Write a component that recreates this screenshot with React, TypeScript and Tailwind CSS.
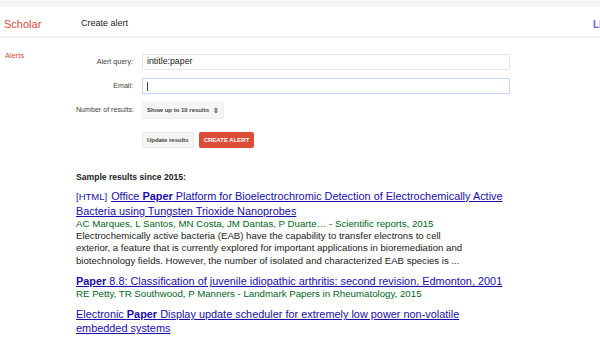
import React from "react";

const font = { fontFamily: '"Liberation Sans", Arial, sans-serif' };

const results = [
  {
    tag: "[HTML]",
    title: (
      <>
        Office <b>Paper</b> Platform for Bioelectrochromic Detection of Electrochemically Active Bacteria using
        Tungsten Trioxide Nanoprobes
      </>
    ),
    authors: "AC Marques, L Santos, MN Costa, JM Dantas, P Duarte… - Scientific reports, 2015",
    snippet:
      "Electrochemically active bacteria (EAB) have the capability to transfer electrons to cell exterior, a feature that is currently explored for important applications in bioremediation and biotechnology fields. However, the number of isolated and characterized EAB species is ...",
  },
  {
    title: (
      <>
        <b>Paper</b> 8.8: Classification of juvenile idiopathic arthritis: second revision, Edmonton, 2001
      </>
    ),
    authors: "RE Petty, TR Southwood, P Manners - Landmark Papers in Rheumatology, 2015",
  },
  {
    title: (
      <>
        Electronic <b>Paper</b> Display update scheduler for extremely low power non-volatile embedded systems
      </>
    ),
    authors: "Y Chiu, C Hoskinson, T Kuroda - Low Power and High Speed Chips (COOL CHIPS) ..., 2015",
  },
];

export default function App() {
  return (
    <div className="w-[600px] h-[337px] overflow-hidden bg-white text-[#222]" style={font}>
      <div className="h-[7px] bg-[#f5f5f5]" />
      <div className="h-[31px] pt-[5px] flex items-center border-b-2 border-[#f1f1f1] relative">
        <div className="pl-[4px] w-[81px] text-[11px] text-[#dd4b39]">Scholar</div>
        <div className="text-[9px] text-[#222]">Create alert</div>
        <div className="absolute left-[593px] text-[10px] font-bold text-[#6a5fe0]">Li</div>
      </div>
      <div className="flex">
        <div className="w-[76px] shrink-0 pl-[5px] pt-[12px] text-[7.5px] text-[#dd4b39]">Alerts</div>
        <div className="flex-1 pt-[16px]">
          <div className="grid grid-cols-[57px_368px] gap-x-[9px] gap-y-[8px] items-center text-[7.1px] text-[#444]">
            <div className="text-right">Alert query:</div>
            <div className="h-[16px] border border-[#e5e5e5] flex items-center px-[4px] text-[8.8px] text-[#222]">
              intitle:paper
            </div>
            <div className="text-right">Email:</div>
            <div className="h-[16px] border border-[#c6d4f5] flex items-center px-[4px]">
              <div className="w-px h-[9px] bg-[#444]" />
            </div>
            <div className="text-right whitespace-nowrap">Number of results:</div>
            <div>
              <div className="inline-flex h-[17px] items-center gap-[4px] bg-[#f5f5f5] border border-[#eee] rounded-[2px] px-[4px] text-[6px] font-bold text-[#444]">
                Show up to 10 results
                <span className="text-[7px] leading-none text-[#666]">⇕</span>
              </div>
            </div>
            <div />
            <div className="flex gap-[5px] mt-[5px]">
              <div className="h-[16px] px-[4px] flex items-center bg-[#f5f5f5] border border-[#e8e8e8] rounded-[2px] text-[6px] font-bold text-[#444]">
                Update results
              </div>
              <div className="h-[16px] px-[5px] flex items-center bg-[#dd4b39] rounded-[2px] text-[6px] font-bold text-white">
                CREATE ALERT
              </div>
            </div>
          </div>
          <div className="mt-[23px] text-[8.6px] font-bold text-[#222]">Sample results since 2015:</div>
          <div className="mt-[5px] w-[430px] flex flex-col gap-[7px]">
            {results.map((r, i) => (
              <div key={i}>
                <div className="text-[10.9px] leading-[14px] text-[#1a0dab]">
                  {r.tag && <span className="text-[9.5px] mr-[4px]">{r.tag}</span>}
                  <span className="underline">{r.title}</span>
                </div>
                <div className="text-[9.7px] leading-[12px] text-[#006621]">{r.authors}</div>
                {r.snippet && (
                  <div className="text-[9.6px] leading-[12.5px] text-[#222] w-[400px]">{r.snippet}</div>
                )}
              </div>
            ))}
          </div>
        </div>
      </div>
    </div>
  );
}
